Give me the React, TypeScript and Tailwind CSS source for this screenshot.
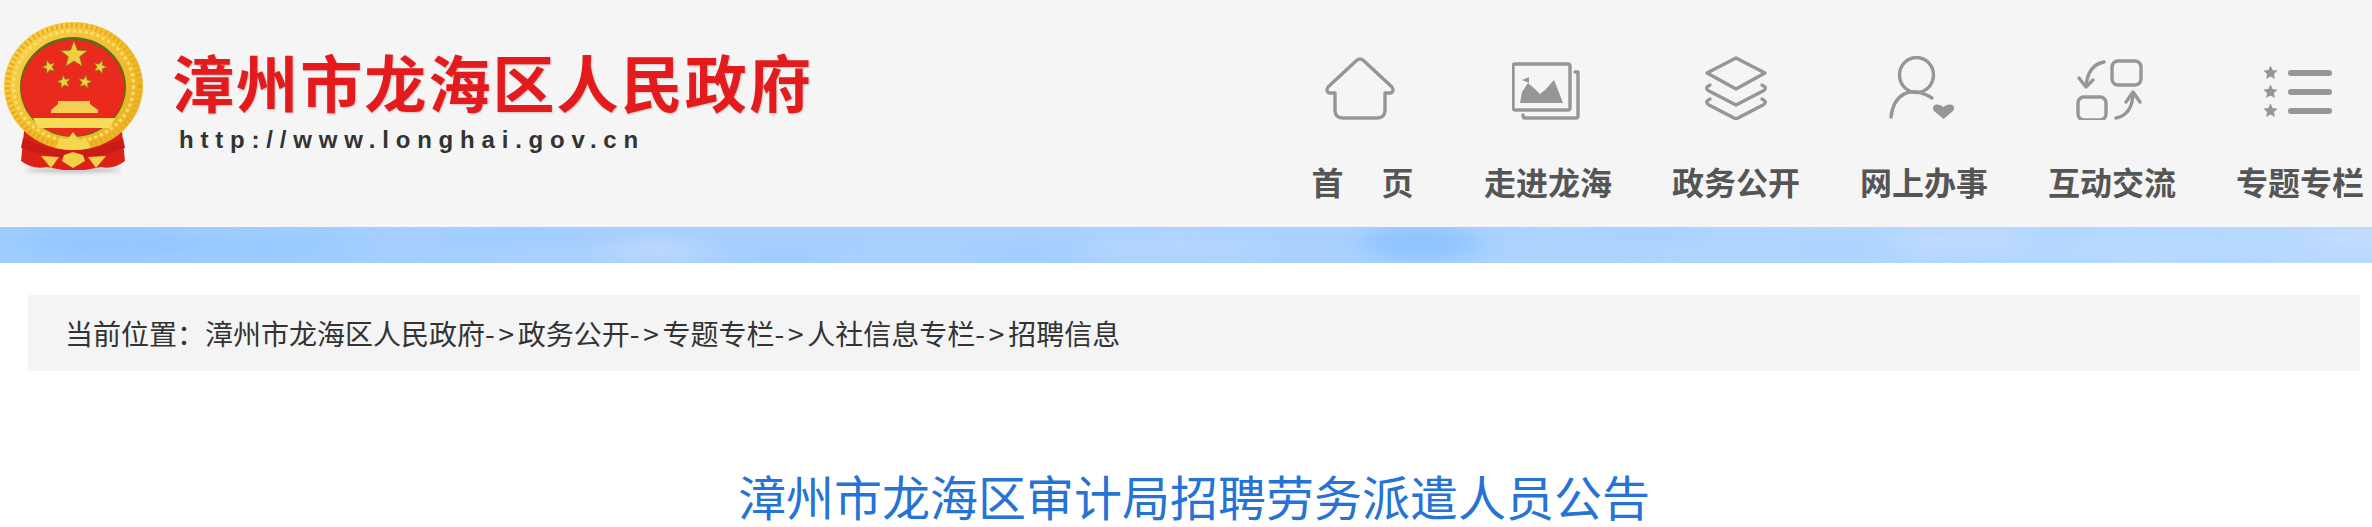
import React from "react";

const CJK = "font-['Noto_Sans_CJK_SC',sans-serif]";

function Star({ cx, cy, r, rot = 0, fill = "#f0cf3c" }: { cx: number; cy: number; r: number; rot?: number; fill?: string }) {
  const pts: string[] = [];
  for (let i = 0; i < 10; i++) {
    const rad = i % 2 === 0 ? r : r * 0.42;
    const a = (-90 + rot + i * 36) * (Math.PI / 180);
    pts.push(`${(cx + rad * Math.cos(a)).toFixed(2)},${(cy + rad * Math.sin(a)).toFixed(2)}`);
  }
  return <polygon points={pts.join(" ")} fill={fill} stroke="#7d7d1c" strokeWidth="0.7" />;
}

function Emblem() {
  return (
    <svg width="146" height="180" viewBox="0 0 146 180" className="shrink-0 block">
      <defs>
        <filter id="soft" x="-5%" y="-5%" width="110%" height="110%"><feGaussianBlur stdDeviation="0.6" /></filter>
        <filter id="shade" x="-20%" y="-100%" width="140%" height="300%"><feGaussianBlur stdDeviation="2" /></filter>
        <linearGradient id="gold" x1="0" y1="0" x2="1" y2="1">
          <stop offset="0" stopColor="#f9d650" />
          <stop offset="0.5" stopColor="#f2be30" />
          <stop offset="1" stopColor="#eab021" />
        </linearGradient>
      </defs>
      <ellipse cx="72" cy="170" rx="48" ry="2.5" fill="#bbb" filter="url(#shade)" />
      <g filter="url(#soft)">
        <path d="M24 122 L20 161 Q32 170 46 167 L62 170 H84 L100 167 Q112 170 124 161 L120 122 Z" fill="#dc2419" />
        <ellipse cx="72.5" cy="86" rx="69.5" ry="64" fill="url(#gold)" />
        <ellipse cx="72.5" cy="86" rx="66" ry="60.5" fill="none" stroke="#e9a91e" strokeWidth="5" strokeDasharray="2 3" />
        <ellipse cx="72.5" cy="86" rx="60" ry="55" fill="none" stroke="#fae070" strokeWidth="3" strokeDasharray="3 3" />
        <ellipse cx="72" cy="87" rx="53" ry="50" fill="#626a1e" />
        <ellipse cx="72" cy="88" rx="51.5" ry="48" fill="#e9291c" />
        <Star cx={73} cy={55} r={14} />
        <Star cx={48} cy={67} r={7} rot={-18} />
        <Star cx={99} cy={67} r={7} rot={18} />
        <Star cx={63} cy={82} r={7} rot={-10} />
        <Star cx={84} cy={82} r={7} rot={10} />
        <path d="M57 101 H89 V104 L97 110 V113 H50 V110 L57 104 Z" fill="#f3cf57" />
        <path d="M32 118 H114 L109 128 H37 Z" fill="#f8dc58" />
        <path d="M58 113 H88 V118 H58 Z" fill="#e9291c" />
        <path d="M22 138 Q46 150 72 151 Q98 150 122 138 L124 148 Q100 158 72 158 Q44 158 20 148 Z" fill="#c91e14" />
        <path d="M54 148 L59 138 L66 140 L72 132 L78 140 L85 138 L90 148 Q72 152 54 148 Z" fill="#f6d64e" />
        <path d="M63 155 L72 152 L82 155 L84 161 L72 168 L61 161 Z" fill="#f3d048" />
        <path d="M40 156 L58 157 L50 168 Z" fill="#f3d048" />
        <path d="M105 156 L87 157 L95 168 Z" fill="#f3d048" />
      </g>
    </svg>
  );
}

const iconProps = {
  width: 72,
  height: 64,
  viewBox: "0 0 72 64",
  fill: "none",
  stroke: "#969696",
  strokeWidth: 3.4,
  strokeLinecap: "round" as const,
  strokeLinejoin: "round" as const,
};

function HomeIcon() {
  return (
    <svg {...iconProps}>
      <path d="M32 5 Q36 1 40 5 L68 31 Q71 36 66 37 L61 37 V54 Q61 62 53 62 H19 Q11 62 11 54 V37 L6 37 Q1 36 4 31 Z" />
    </svg>
  );
}
function ImageIcon() {
  return (
    <svg {...iconProps}>
      <rect x="1" y="8" width="57" height="46" rx="2" />
      <path d="M63 16 H66 V60 Q66 62 64 62 H13 Q11 62 11 59" />
      <path d="M17 21 V27 L10 24 Z" fill="#969696" stroke="none" />
      <path d="M8 47 L10 36 L16 27 L23 33 L28 38 L33 34 L42 24 L46 34 L51 47 Z" fill="#969696" stroke="none" />
    </svg>
  );
}
function LayersIcon() {
  return (
    <svg {...iconProps}>
      <path d="M36 2 L65 17 L36 33 L7 17 Z" />
      <path d="M10 29 Q4 32 9 35 L36 49 L63 35 Q68 32 62 29" />
      <path d="M10 43 Q4 46 9 49 L36 63 L63 49 Q68 46 62 43" />
    </svg>
  );
}
function PersonIcon() {
  return (
    <svg {...iconProps}>
      <ellipse cx="28.5" cy="19" rx="17" ry="17.5" />
      <path d="M3 61 Q5 44 16 38 Q28 32 44 42" />
      <path d="M55.5 63 L46 55 Q43 50 48 48.5 Q53 48 55.5 51 Q58 48 63 48.5 Q68 50 65 55 Z" fill="#969696" stroke="none" />
    </svg>
  );
}
function ExchangeIcon() {
  return (
    <svg {...iconProps}>
      <rect x="36" y="5" width="29" height="24" rx="6" />
      <rect x="2" y="41" width="28" height="23" rx="6" />
      <path d="M28 6 Q12 9 10 30" />
      <path d="M3 22 L10 31 L17 24" />
      <path d="M40 62 Q56 59 57 38" />
      <path d="M50 46 L57 36 L64 46" />
    </svg>
  );
}
function StarListIcon() {
  const s = (cy: number) => {
    const pts: string[] = [];
    for (let i = 0; i < 10; i++) {
      const rad = i % 2 === 0 ? 7.5 : 3.6;
      const a = (-90 + i * 36) * (Math.PI / 180);
      pts.push(`${(6.5 + rad * Math.cos(a)).toFixed(2)},${(cy + rad * Math.sin(a)).toFixed(2)}`);
    }
    return <polygon key={cy} points={pts.join(" ")} fill="#969696" stroke="none" />;
  };
  return (
    <svg {...iconProps} strokeWidth={6}>
      {[17, 36, 55].map(s)}
      <path d="M27 17 H65 M27 36 H65 M27 55 H65" />
    </svg>
  );
}

const nav: { key: string; label: React.ReactNode; icon: React.ReactNode }[] = [
  {
    key: "home",
    label: (
      <span className="flex gap-[38px] ml-[5px]">
        <span>首</span>
        <span>页</span>
      </span>
    ),
    icon: <HomeIcon />,
  },
  { key: "about", label: "走进龙海", icon: <ImageIcon /> },
  { key: "gov", label: "政务公开", icon: <LayersIcon /> },
  { key: "service", label: "网上办事", icon: <PersonIcon /> },
  { key: "talk", label: "互动交流", icon: <ExchangeIcon /> },
  { key: "topic", label: "专题专栏", icon: <StarListIcon /> },
];

function Sky() {
  const clouds: [number, number, number, number, string, number][] = [
    [110, 15, 90, 16, "#90c5ff", 0.7],
    [250, 20, 100, 14, "#92c7ff", 0.6],
    [530, 14, 90, 12, "#9ccbff", 0.5],
    [655, 24, 50, 10, "#c6dcfd", 0.8],
    [570, 28, 80, 8, "#b8d6fe", 0.5],
    [785, 30, 40, 8, "#98caff", 0.7],
    [1030, 26, 60, 12, "#9ccbff", 0.5],
    [1170, 20, 90, 10, "#b9d7ff", 0.8],
    [1420, 16, 60, 18, "#8bc2ff", 0.9],
    [1650, 8, 60, 8, "#a6d0ff", 0.7],
    [1840, 20, 60, 10, "#a8d1ff", 0.6],
    [1960, 14, 70, 12, "#c3dcff", 0.8],
    [2130, 22, 60, 10, "#c0dbff", 0.5],
    [2360, 10, 50, 10, "#c8dffd", 0.8],
  ];
  return (
    <svg width="2372" height="36" viewBox="0 0 2372 36" preserveAspectRatio="none" className="block w-full h-[36px]">
      <defs>
        <linearGradient id="skyBase" x1="0" y1="0" x2="1" y2="0">
          <stop offset="0" stopColor="#9ecdff" />
          <stop offset="0.2" stopColor="#a5cfff" />
          <stop offset="0.45" stopColor="#a9d1ff" />
          <stop offset="0.7" stopColor="#aed4ff" />
          <stop offset="1" stopColor="#b8d9ff" />
        </linearGradient>
        <filter id="cloud" x="-50%" y="-150%" width="200%" height="400%"><feGaussianBlur stdDeviation="18 8" /></filter>
      </defs>
      <rect width="2372" height="36" fill="url(#skyBase)" />
      <g filter="url(#cloud)">
        {clouds.map(([cx, cy, rx, ry, c, o], i) => (
          <ellipse key={i} cx={cx} cy={cy} rx={rx} ry={ry} fill={c} opacity={o} />
        ))}
      </g>
    </svg>
  );
}

function Arrow() {
  return <span className="tracking-[3.75px]">-&gt;</span>;
}

export default function App() {
  return (
    <div className={`bg-white h-[527px] overflow-hidden ${CJK}`}>
      <header className="h-[227px] bg-[#f5f5f5] flex justify-between">
        <div className="flex items-start pl-[1px]">
          <Emblem />
          <div className="ml-[25px] pt-[44px]">
            <div className="text-[62px] leading-[74px] font-bold tracking-[2.1px] text-[#e41b1c] whitespace-nowrap [text-shadow:1px_1px_2px_rgba(0,0,0,0.2)]">
              漳州市龙海区人民政府
            </div>
            <div className="mt-[7px] ml-[7px] font-['Liberation_Sans',sans-serif] text-[24px] leading-[30px] tracking-[6.8px] font-bold text-[#333] whitespace-nowrap">
              http://www.longhai.gov.cn
            </div>
          </div>
        </div>
        <nav className="flex gap-[60px] pt-[56px] pr-[8px]">
          {nav.map((n) => (
            <div key={n.key} className="w-[128px] flex flex-col items-center">
              {n.icon}
              <div className="mt-[38px] text-[32px] leading-[46px] font-bold text-[#555] whitespace-nowrap">
                {n.label}
              </div>
            </div>
          ))}
        </nav>
      </header>
      <Sky />
      <main className="ml-[28px] w-[2332px]">
        <div className="mt-[32px] h-[76px] bg-[#f4f4f4] pl-[37px] text-[28px] leading-[76px] text-[#333] whitespace-nowrap">
          当前位置：漳州市龙海区人民政府<Arrow />政务公开<Arrow />专题专栏<Arrow />人社信息专栏<Arrow />招聘信息
        </div>
        <h1 className="mt-[94px] text-center text-[48px] leading-[60px] font-normal text-[#2673d6] whitespace-nowrap">
          漳州市龙海区审计局招聘劳务派遣人员公告
        </h1>
      </main>
    </div>
  );
}
